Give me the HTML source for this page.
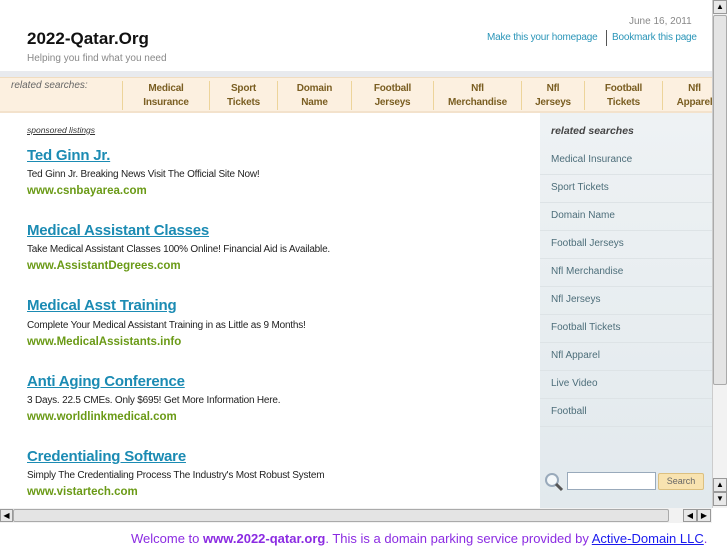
<!DOCTYPE html>
<html><head><style>
*{margin:0;padding:0;box-sizing:border-box}
body{width:727px;height:545px;overflow:hidden;background:#fff;font-family:"Liberation Sans",sans-serif;position:relative}
.a{position:absolute;white-space:nowrap}
.nav{position:absolute;left:0;top:77px;width:712px;height:36px;background:#fcf0e0;border-top:1px solid #f0dcc0;border-bottom:2px solid #f3e2cc}
.nc{position:absolute;top:3px;height:29px;border-left:1px solid #edd49a;text-align:center;font-size:10px;font-weight:bold;color:#7a5e22;line-height:14px;padding-top:1px;letter-spacing:-0.2px}
.t{position:absolute;left:27px;font-size:15px;font-weight:bold;color:#1b8bb3;text-decoration:underline;white-space:nowrap;letter-spacing:-0.2px}
.d{position:absolute;left:27px;font-size:10px;color:#222;white-space:nowrap;letter-spacing:-0.2px}
.u{position:absolute;left:27px;font-size:11.5px;font-weight:bold;color:#6a9a16;white-space:nowrap}
.side{position:absolute;left:540px;top:113px;width:172px;height:395px;background:linear-gradient(#eef2f4,#e2e9ed)}
.si{position:absolute;left:0;width:172px;height:28px;border-bottom:1px solid #dde3e6;font-size:10px;color:#4d6e7a;padding:7px 0 0 11px}
.sb{background:#e8e8e8;border:1px solid #999}
</style></head><body>
<div class="a" style="left:629px;top:16px;font-size:10px;color:#888">June 16, 2011</div>
<div class="a" style="left:27px;top:29px;font-size:17px;font-weight:bold;color:#111">2022-Qatar.Org</div>
<div class="a" style="left:27px;top:53px;font-size:10px;color:#888">Helping you find what you need</div>
<div class="a" style="left:487px;top:32px;font-size:10px;color:#2a95b8;letter-spacing:-0.2px">Make this your homepage</div>
<div class="a" style="left:606px;top:30px;width:1px;height:16px;background:#555"></div>
<div class="a" style="left:612px;top:32px;font-size:10px;color:#2a95b8;letter-spacing:-0.2px">Bookmark this page</div>
<div class="a" style="left:0;top:71px;width:712px;height:6px;background:#e8eaee"></div>
<div class="nav">
<div class="a" style="left:11px;top:2px;font-size:10px;font-style:italic;color:#666">related searches:</div>
<div class="nc" style="left:122px;width:87px">Medical<br>Insurance</div>
<div class="nc" style="left:209px;width:68px">Sport<br>Tickets</div>
<div class="nc" style="left:277px;width:74px">Domain<br>Name</div>
<div class="nc" style="left:351px;width:82px">Football<br>Jerseys</div>
<div class="nc" style="left:433px;width:88px">Nfl<br>Merchandise</div>
<div class="nc" style="left:521px;width:63px">Nfl<br>Jerseys</div>
<div class="nc" style="left:584px;width:78px">Football<br>Tickets</div>
<div class="nc" style="left:662px;width:64px">Nfl<br>Apparel</div>
</div>
<div class="a" style="left:27px;top:125px;font-size:8.5px;font-style:italic;color:#333;text-decoration:underline">sponsored listings</div>

<div class="t" style="top:147px">Ted Ginn Jr.</div>
<div class="d" style="top:169px">Ted Ginn Jr. Breaking News Visit The Official Site Now!</div>
<div class="u" style="top:185px">www.csnbayarea.com</div>
<div class="t" style="top:222px">Medical Assistant Classes</div>
<div class="d" style="top:244px">Take Medical Assistant Classes 100% Online! Financial Aid is Available.</div>
<div class="u" style="top:260px">www.AssistantDegrees.com</div>
<div class="t" style="top:297px">Medical Asst Training</div>
<div class="d" style="top:320px">Complete Your Medical Assistant Training in as Little as 9 Months!</div>
<div class="u" style="top:336px">www.MedicalAssistants.info</div>
<div class="t" style="top:373px">Anti Aging Conference</div>
<div class="d" style="top:395px">3 Days. 22.5 CMEs. Only $695! Get More Information Here.</div>
<div class="u" style="top:411px">www.worldlinkmedical.com</div>
<div class="t" style="top:448px">Credentialing Software</div>
<div class="d" style="top:470px">Simply The Credentialing Process The Industry's Most Robust System</div>
<div class="u" style="top:486px">www.vistartech.com</div>

<div class="side">
<div class="a" style="left:11px;top:12px;font-size:10.5px;font-weight:bold;font-style:italic;color:#444">related searches</div>
<div class="si" style="top:34px">Medical Insurance</div>
<div class="si" style="top:62px">Sport Tickets</div>
<div class="si" style="top:90px">Domain Name</div>
<div class="si" style="top:118px">Football Jerseys</div>
<div class="si" style="top:146px">Nfl Merchandise</div>
<div class="si" style="top:174px">Nfl Jerseys</div>
<div class="si" style="top:202px">Football Tickets</div>
<div class="si" style="top:230px">Nfl Apparel</div>
<div class="si" style="top:258px">Live Video</div>
<div class="si" style="top:286px">Football</div>
<svg class="a" style="left:4px;top:359px" width="20" height="20"><circle cx="8" cy="8" r="6" fill="#f4f8fa" stroke="#9ab" stroke-width="2"/><line x1="12" y1="12" x2="18" y2="18" stroke="#555" stroke-width="3"/></svg>
<div class="a" style="left:27px;top:359px;width:89px;height:18px;background:#fff;border:1px solid #9ab"></div>
<div class="a" style="left:118px;top:360px;width:46px;height:17px;background:#f8e3b0;border:1px solid #dcc080;border-radius:2px;font-size:9px;color:#666;text-align:center;line-height:15px">Search</div>
</div>

<div class="a" style="left:712px;top:0;width:15px;height:508px;background:#f2f2f2;border-left:1px solid #ccc"></div>
<div class="a sb" style="left:713px;top:0;width:14px;height:14px;font-size:8px;text-align:center;line-height:12px">▲</div>
<div class="a" style="left:713px;top:15px;width:14px;height:370px;background:#e4e4e4;border:1px solid #aaa;border-radius:2px"></div>
<div class="a sb" style="left:713px;top:478px;width:14px;height:14px;font-size:8px;text-align:center;line-height:12px">▲</div>
<div class="a sb" style="left:713px;top:492px;width:14px;height:14px;font-size:8px;text-align:center;line-height:12px">▼</div>
<div class="a" style="left:0;top:508px;width:712px;height:15px;background:#f2f2f2"></div>
<div class="a sb" style="left:0;top:509px;width:13px;height:13px;font-size:8px;text-align:center;line-height:11px">◀</div>
<div class="a" style="left:13px;top:509px;width:656px;height:13px;background:#e4e4e4;border:1px solid #aaa;border-radius:2px"></div>
<div class="a sb" style="left:683px;top:509px;width:14px;height:13px;font-size:8px;text-align:center;line-height:11px">◀</div>
<div class="a sb" style="left:697px;top:509px;width:14px;height:13px;font-size:8px;text-align:center;line-height:11px">▶</div>

<div class="a" style="left:131px;top:531px;font-size:13px;color:#8b2be2">Welcome to <b>www.2022-qatar.org</b>. This is a domain parking service provided by <span style="color:#1a1aee;text-decoration:underline">Active-Domain LLC</span>.</div>
</body></html>
